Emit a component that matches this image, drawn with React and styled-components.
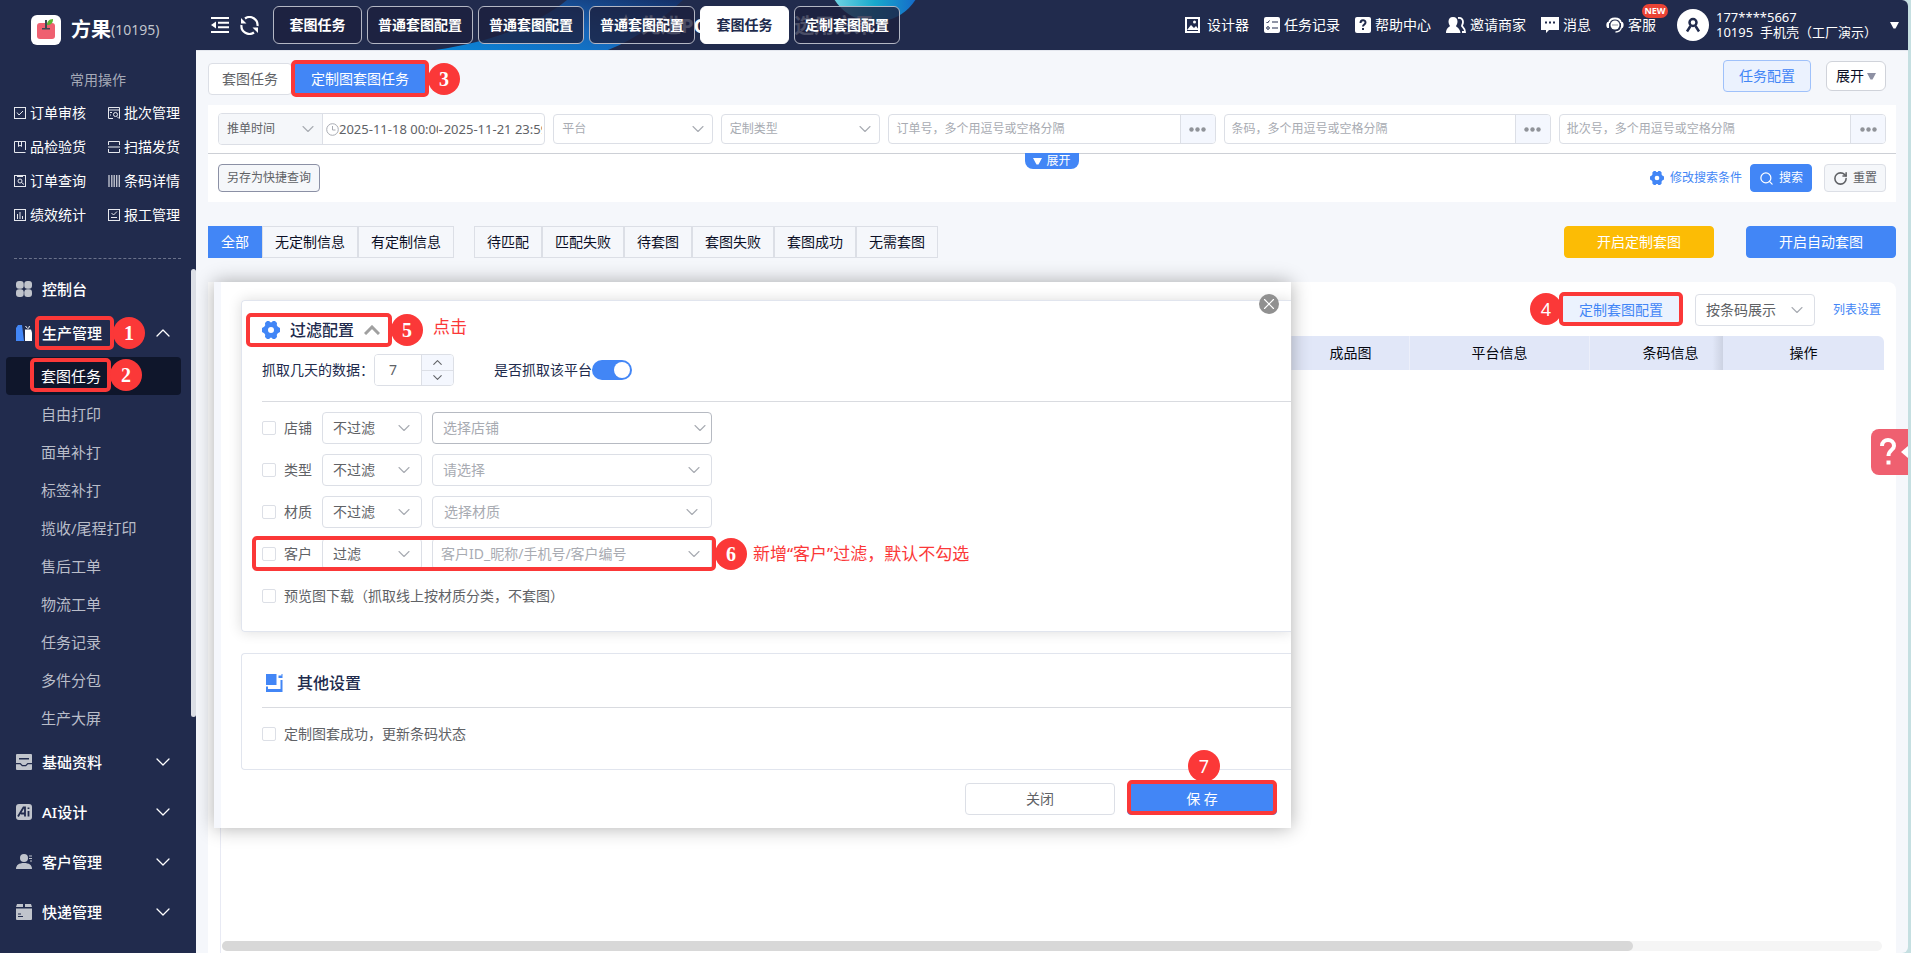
import React from "react";
import styled, { createGlobalStyle, css } from "styled-components";
import { ChevronDown, ChevronUp, Search, RotateCw, X } from "lucide-react";

const GlobalStyle = createGlobalStyle`
  * {
    box-sizing: border-box;
  }
  body {
    margin: 0;
    background: #c5dfe1;
    color: #212b4d;
    font-family: "Noto Sans", "Noto Sans CJK SC", sans-serif;
    font-size: 14px;
    line-height: 20px;
  }
  button, input, select {
    font-family: inherit;
    font-size: inherit;
    line-height: inherit;
    color: inherit;
    margin: 0;
  }
  button {
    cursor: pointer;
    white-space: nowrap;
  }
  a {
    color: inherit;
    text-decoration: none;
    white-space: nowrap;
  }
  svg {
    flex-shrink: 0;
    display: block;
  }
`;

const Shell = styled.div`
  display: flex;
  min-height: 100vh;
  margin-right: 3px;
  background: #f5f7fb;
  border-radius: 0 6px 6px 0;
  overflow: hidden;
  position: relative;
`;

/* ---- callouts ---- */
const Anchor = styled.span`
  position: relative;
  display: inline-flex;
  align-items: center;
  white-space: nowrap;
`;
const Frame = styled.span`
  position: absolute;
  inset: ${p => p.$inset};
  border: 4px solid #fb3838;
  border-radius: 5px;
  pointer-events: none;
  z-index: 3;
`;
const sides = {
  right: css`right: -35px; top: 50%; margin-top: -16px;`,
  left: css`left: -33px; top: 50%; margin-top: -16px;`,
  top: css`left: 50%; top: -34px; margin-left: -14px;`,
};
const Badge = styled.span`
  position: absolute;
  ${p => sides[p.$side]}
  width: 32px;
  height: 32px;
  border-radius: 50%;
  background: #fb3838;
  color: #fff;
  display: flex;
  align-items: center;
  justify-content: center;
  font-family: ${p => (p.$sans ? '"Noto Sans", sans-serif' : '"Liberation Serif", serif')};
  font-size: ${p => (p.$sans ? 18 : 20)}px;
  font-weight: ${p => (p.$sans ? 400 : 700)};
`;
const Mark = ({ n, inset, side = "right", sans }) => (
  <Frame $inset={inset}>
    <Badge $side={side} $sans={sans}>{n}</Badge>
  </Frame>
);
const Note = styled.span`
  color: #fb3838;
  font-size: 17px;
  line-height: 28px;
  white-space: nowrap;
`;

/* ---- sidebar ---- */
const Sidebar = styled.aside`
  position: relative;
  width: 196px;
  flex-shrink: 0;
  background: #212b4d;
  color: #fff;
`;
const Brand = styled.div`
  display: flex;
  align-items: center;
  padding: 15px 0 0 31px;
`;
const BrandName = styled.span`
  margin-left: 10px;
  font-size: 20px;
  font-weight: 700;
  line-height: 30px;
`;
const BrandId = styled.span`
  color: #c0c4cc;
`;
const QuickTitle = styled.div`
  margin-top: 25px;
  text-align: center;
  color: #a6aab8;
`;
const QuickGrid = styled.nav`
  display: grid;
  grid-template-columns: 94px 1fr;
  row-gap: 14px;
  margin: 13px 15px 0 14px;
  padding-bottom: 33px;
  border-bottom: 1px dashed #6b728a;
`;
const QuickLink = styled.a`
  display: flex;
  align-items: center;
  gap: 4px;
`;
const Menu = styled.nav`
  padding-top: 9px;
  font-size: 15px;
`;
const MenuGroup = styled.a`
  display: flex;
  align-items: center;
  height: ${p => p.$h || 50}px;
  padding: 0 21px 0 16px;
  gap: 10px;
  font-weight: 500;
  & > svg:last-child {
    margin-left: auto;
  }
`;
const SubItem = styled.a`
  display: flex;
  align-items: center;
  height: 38px;
  margin: 0 15px 0 6px;
  padding-left: 35px;
  border-radius: 4px;
  color: ${p => (p.$active ? "#fff" : "#b9bdc9")};
  background: ${p => (p.$active ? "#0f162b" : "transparent")};
`;
const SideScroll = styled.div`
  position: absolute;
  right: 0;
  top: 269px;
  width: 5px;
  height: 448px;
  border-radius: 3px;
  background: #dcdfe6;
`;

/* ---- header ---- */
const Main = styled.main`
  flex: 1;
  min-width: 0;
  display: flex;
  flex-direction: column;
`;
const Header = styled.header`
  position: relative;
  height: 51px;
  display: flex;
  align-items: center;
  padding: 0 9px 0 15px;
  background: #212b4d;
  border-bottom: 1px solid #e4e7ee;
  color: #fff;
  overflow: hidden;
`;
const Banner = styled.div`
  position: absolute;
  left: 239px;
  top: 0;
  height: 50px;
`;
const Slogan = styled.span`
  position: absolute;
  left: 206px;
  top: 11px;
  font-size: 20px;
  line-height: 30px;
  font-weight: 700;
  white-space: nowrap;
`;
const HeaderLeft = styled.div`
  position: relative;
  display: flex;
  align-items: center;
  gap: 5px;
`;
const IconButton = styled.button`
  display: flex;
  padding: 0;
  border: 0;
  background: none;
  color: #fff;
  margin-right: ${p => p.$mr}px;
`;
const PageTab = styled.button`
  min-width: 89px;
  height: 38px;
  padding: 0 10px;
  border: 1px solid ${p => (p.$active ? "#fff" : "#b4b7c4")};
  border-radius: 6px;
  background: ${p => (p.$active ? "#fff" : "rgba(29, 33, 62, 0.8)")};
  color: ${p => (p.$active ? "#212b4d" : "#fff")};
  font-weight: 700;
`;
const HeaderRight = styled.div`
  position: relative;
  margin-left: auto;
  display: flex;
  align-items: center;
`;
const TopLink = styled.a`
  position: relative;
  display: flex;
  align-items: center;
  gap: ${p => p.$gap || 4}px;
  margin-right: 15px;
`;
const NewTag = styled.span`
  position: absolute;
  right: -12px;
  top: -11px;
  width: 26px;
  height: 14px;
  border-radius: 7px;
  background: #ea4335;
  font-size: 9px;
  line-height: 14px;
  font-weight: 700;
  text-align: center;
`;
const Avatar = styled.span`
  width: 32px;
  height: 32px;
  margin-left: 6px;
  border-radius: 50%;
  background: #fff;
  display: flex;
  align-items: center;
  justify-content: center;
`;
const Account = styled.div`
  width: 159px;
  margin: 0 15px 0 7px;
  font-size: 13px;
  line-height: 15px;
  white-space: nowrap;
`;

/* ---- content ---- */
const Content = styled.div`
  flex: 1;
  display: flex;
  flex-direction: column;
  padding: 0 12px;
`;
const TopRow = styled.div`
  display: flex;
  align-items: flex-start;
  height: 54px;
  padding-top: 9px;
`;
const Tabs = styled.div`
  display: flex;
  margin-top: 3px;
  margin-right: auto;
`;
const Button = styled.button`
  display: inline-flex;
  align-items: center;
  justify-content: center;
  gap: 6px;
  height: ${p => p.$h || 32}px;
  min-width: ${p => p.$w || 0}px;
  padding: 0 9px;
  border: 1px solid #dcdfe6;
  border-radius: 4px;
  background: #fff;
  color: #606266;
  ${p => p.$small && css`
    height: 28px;
    padding: 0 8px;
    gap: 5px;
    font-size: 12px;
  `}
  ${p => p.$kind === "primary" && css`
    background: #4286f6;
    border-color: #4286f6;
    color: #fff;
  `}
  ${p => p.$kind === "warn" && css`
    background: #fcbc05;
    border-color: #fcbc05;
    color: #fff;
  `}
  ${p => p.$kind === "plain" && css`
    background: #ebf2fe;
    border-color: #9fc1fa;
    color: #4286f6;
  `}
  ${p => p.$kind === "grey" && css`
    background: #f5f7fa;
  `}
`;
const SaveQuery = styled(Button)`
  margin-right: auto;
  border-color: #8b90a5;
`;
const ResetButton = styled(Button)`
  margin-left: 4px;
`;
const ExpandButton = styled(Button)`
  margin: 1px 10px 0 15px;
  color: #0b0f26;
  border-color: #d0d3da;
  border-radius: 6px;
  gap: 3px;
`;
const SearchPanel = styled.section`
  background: #fff;
`;
const SearchGrid = styled.div`
  position: relative;
  display: grid;
  grid-template-columns: repeat(5, minmax(0, 1fr));
  gap: 8px;
  align-items: center;
  height: 49px;
  padding: 0 10px;
  font-size: 12px;
  border-bottom: 1px solid #cdd0d6;
`;
const Pair = styled.div`
  display: grid;
  grid-template-columns: 1fr 1fr;
  gap: 8px;
`;
const Joined = styled.div`
  display: flex;
  height: ${p => p.$h || 30}px;
  border: 1px solid #dcdfe6;
  border-radius: 4px;
  background: #fff;
  overflow: hidden;
`;
const PlainInput = styled.input`
  flex: 1;
  min-width: 0;
  width: 100%;
  padding: 0 ${p => p.$pad || 0}px;
  border: 0;
  outline: 0;
  background: transparent;
  &::placeholder {
    color: #a8abb2;
  }
`;
const DateRange = styled.div`
  flex: 1;
  min-width: 0;
  display: flex;
  align-items: center;
  padding: 0 2px 0 3px;
  color: #606266;
  font-size: 13px;
  span {
    padding: 0 1px;
  }
`;
const MoreButton = styled.button`
  flex-shrink: 0;
  width: 35px;
  padding: 0;
  border: 0;
  border-left: 1px solid #dcdfe6;
  background: #f4f7fe;
  color: #909399;
  display: flex;
  align-items: center;
  justify-content: center;
`;
const SelectBox = styled.span`
  position: relative;
  display: flex;
  align-items: center;
  flex-shrink: 0;
  width: ${p => p.$w || "100%"};
  height: ${p => p.$h || 32}px;
  border: 1px solid ${p => (p.$strong ? "#b6bac2" : "#dcdfe6")};
  border-radius: 4px;
  background: #fff;
  color: ${p => (p.$value ? "#606266" : "#a8abb2")};
  ${p => p.$bare && css`
    border-width: 0 1px 0 0;
    border-radius: 0;
    height: 100%;
    background: #f5f7fa;
  `}
  svg {
    position: absolute;
    right: ${p => p.$right || 7}px;
    color: #a8abb2;
    pointer-events: none;
  }
  select {
    width: 100%;
    height: 100%;
    padding: 0 28px 0 ${p => p.$pad || 8}px;
    border: 0;
    outline: 0;
    appearance: none;
    background: transparent;
  }
`;
const PullTab = styled.button`
  position: absolute;
  left: 817px;
  top: 48px;
  width: 54px;
  height: 16px;
  padding: 0;
  border: 0;
  border-radius: 0 0 8px 8px;
  background: #4286f6;
  color: #fff;
  display: flex;
  align-items: center;
  justify-content: center;
  gap: 4px;
  line-height: 16px;
`;
const SearchActions = styled.div`
  display: flex;
  align-items: center;
  gap: 8px;
  padding: 10px;
`;
const BlueLink = styled.a`
  display: flex;
  align-items: center;
  gap: 6px;
  color: #4286f6;
  font-size: 12px;
`;
const FilterRow = styled.div`
  display: flex;
  margin: 24px 0;
`;
const Segment = styled.div`
  display: flex;
  margin-right: 20px;
`;
const SegmentItem = styled.button`
  height: 32px;
  padding: 0 12px;
  border: 1px solid #dcdfe6;
  background: transparent;
  color: #0b0f26;
  border-radius: 0;
  ${p => p.$active && css`
    background: #4286f6;
    border-color: #4286f6;
    color: #fff;
  `}
`;
const FilterActions = styled.div`
  display: flex;
  gap: 32px;
  margin-left: auto;
`;

/* ---- table ---- */
const TablePanel = styled.section`
  position: relative;
  flex: 1;
  display: flex;
  flex-direction: column;
  padding: 12px 12px 0;
  background: #fff;
  border-radius: 0 8px 0 0;
`;
const TableTools = styled.div`
  display: flex;
  align-items: center;
  justify-content: flex-end;
  margin: 0 3px 10px 0;
`;
const ToolSelect = styled.div`
  margin: 0 18px 0 14px;
`;
const TableWrap = styled.div`
  flex: 1;
  display: flex;
  flex-direction: column;
  border-left: 1px solid #e8eaf4;
`;
const Table = styled.table`
  width: 100%;
  table-layout: fixed;
  border-collapse: separate;
  border-spacing: 0;
  th {
    height: 34px;
    padding: 0;
    font-weight: 400;
    color: #05070f;
    background: #e1e7f8;
    border-right: 1px solid #eceffa;
  }
  th:nth-child(4) {
    padding-left: 28px;
    border-right: 0;
    background: linear-gradient(to right, #e1e7f8 92%, #ccd2e2);
  }
  th:last-child {
    border-right: 0;
    border-top-right-radius: 6px;
  }
`;
const HScroll = styled.div`
  height: 10px;
  margin: auto 2px 2px 1px;
  border-radius: 5px;
  background: #f5f5f5;
  &::before {
    content: "";
    display: block;
    width: 85%;
    height: 10px;
    border-radius: 5px;
    background: #d8d8d8;
  }
`;
const HelpTab = styled.button`
  position: absolute;
  right: 0;
  top: 429px;
  width: 37px;
  height: 46px;
  padding: 0 0 0 7px;
  border: 0;
  border-radius: 8px 0 0 8px;
  background: #ef6070;
`;

/* ---- dialog ---- */
const Dialog = styled.div`
  position: absolute;
  left: 6px;
  right: 605px;
  top: 0;
  padding: 18px 0 13px 20px;
  border-left: 7px solid #f5f7fc;
  background: #fff;
  box-shadow: 0 0 18px rgba(0, 0, 0, 0.32);
  overflow: hidden;
  z-index: 2;
`;
const Card = styled.section`
  padding: 12px 0 19px 20px;
  border: 1px solid #e1e5ee;
  border-right: 0;
  border-radius: 4px 0 0 4px;
  box-shadow: ${p => (p.$raised ? "0 0 14px rgba(0, 0, 0, 0.14)" : "none")};
  & + & {
    margin-top: 21px;
  }
`;
const CardTitle = styled.h2`
  display: flex;
  align-items: center;
  height: 34px;
  margin: 0;
  font-size: 16px;
  font-weight: 500;
  ${Anchor} {
    height: 24px;
    gap: 10px;
  }
  ${Note} {
    align-self: flex-start;
    margin-left: 53px;
    font-weight: 400;
  }
`;
const TitleSpaced = styled(CardTitle)`
  gap: 14px;
  padding-left: 3px;
`;
const DaysRow = styled.div`
  display: flex;
  align-items: center;
  margin-top: 7px;
`;
const Stepper = styled.div`
  display: flex;
  width: 80px;
  height: 32px;
  margin-right: 40px;
  border: 1px solid #dcdfe6;
  border-radius: 4px;
  overflow: hidden;
  color: #606266;
  input {
    width: 46px;
    padding: 0 0 0 14px;
    border: 0;
    outline: 0;
    appearance: textfield;
  }
  input::-webkit-inner-spin-button {
    appearance: none;
  }
`;
const StepButtons = styled.div`
  flex: 1;
  display: flex;
  flex-direction: column;
  border-left: 1px solid #dcdfe6;
  background: #f4f7fe;
  button {
    flex: 1;
    display: flex;
    align-items: center;
    justify-content: center;
    min-height: 0;
    padding: 0;
    border: 0;
    background: none;
  }
  button + button {
    border-top: 1px solid #dcdfe6;
  }
`;
const Switch = styled.input`
  appearance: none;
  width: 40px;
  height: 20px;
  border-radius: 10px;
  background: #4286f6;
  &::after {
    content: "";
    display: block;
    width: 16px;
    height: 16px;
    margin: 2px 2px 2px 22px;
    border-radius: 50%;
    background: #fff;
  }
`;
const Line = styled.hr`
  height: 1px;
  margin: ${p => p.$top}px 0 0;
  border: 0;
  background: #d9dbe0;
`;
const Rows = styled.div`
  display: flex;
  flex-direction: column;
  gap: 10px;
  margin-top: 10px;
`;
const Row = styled.div`
  display: flex;
  align-items: center;
  gap: 10px;
  height: 32px;
`;
const Check = styled.label`
  display: flex;
  align-items: center;
  gap: 8px;
  color: #606266;
  white-space: nowrap;
  input {
    appearance: none;
    width: 14px;
    height: 14px;
    border: 1px solid #dcdfe6;
    border-radius: 2px;
    background: #fff;
  }
`;
const RowAnchor = styled(Anchor)`
  gap: 10px;
`;
const RowNote = styled(Note)`
  margin-left: 31px;
`;
const Footer = styled.div`
  display: flex;
  justify-content: flex-end;
  gap: 12px;
  margin: 13px 14px 0 0;
`;
const CloseButton = styled.button`
  position: absolute;
  right: 12px;
  top: 12px;
  width: 20px;
  height: 20px;
  padding: 0;
  border: 0;
  border-radius: 50%;
  background: #909090;
  color: #fff;
  display: flex;
  align-items: center;
  justify-content: center;
`;

/* ---- icons ---- */
const Logo = () => (
  <svg width="30" height="30" viewBox="0 0 30 30">
    <rect width="30" height="30" rx="6" fill="#fff" />
    <rect x="6" y="8" width="18" height="16" rx="3" fill="#ef6070" />
    <path d="M14 5h2v8h3v1.500h-8V13h3z" fill="#3c4a52" />
    <path d="M16 10c0-4 2-5.500 6-6 0 4-2 6-6 6z" fill="#5cb531" />
  </svg>
);
const quickShapes = {
  check: <><rect x="0.500" y="0.500" width="11" height="11" /><path d="M3 5.500l2 2.500 4-4" /></>,
  batch: <><path d="M5 11.500H.5V.5h11v11" /><path d="M.5 3h11M2 5.500h2M2 8h1" /><circle cx="7.500" cy="7.500" r="2" /><path d="M9 9.500l2 2" /></>,
  book: <><path d="M11.500 9V.5H.5v11h11" /><path d="M4.500.5v5L6 4.200l1.500 1.300v-5" /></>,
  scan: <><path d="M.5 4V.5h11V4M.5 8v3.500h11V8" /><path d="M0 6h12" strokeWidth="1.500" opacity="0.700" /></>,
  find: <><rect x="0.500" y="0.500" width="11" height="11" /><path d="M3 1.500h6M7.500 7.500l2.500 2" /><circle cx="6" cy="6" r="2" /></>,
  bars: <path d="M1 0v12M3.800 0v12M6.200 0v12M8.700 0v12M11.300 0v12" strokeWidth="1.300" opacity="0.850" />,
  chart: <><rect x="0.500" y="0.500" width="11" height="11" /><path d="M3.500 5v5M6 3v7M8.500 7v3" /></>,
  report: <><rect x="0.500" y="0.500" width="11" height="11" /><path d="M3.500 4l2 2 3.500-3.500M3 8.500h6" /></>,
};
const QuickIcon = ({ name }) => (
  <svg width="12" height="12" viewBox="0 0 12 12" fill="none" stroke="#e6e8ee" strokeWidth="1">
    {quickShapes[name]}
  </svg>
);
const menuShapes = {
  console: <>
    <rect x="0" y="0" width="7.700" height="7.700" rx="3" /><rect x="8.300" y="0" width="7.700" height="7.700" rx="3" />
    <rect x="0" y="8.300" width="7.700" height="7.700" rx="3" /><rect x="8.300" y="8.300" width="7.700" height="7.700" rx="3" />
  </>,
  production: <>
    <path d="M2 0h4l2 16H0V3z" fill="#4286f6" />
    <path d="M9 4.500h6l1 3V16H9z" fill="#fff" /><path d="M9.500 1l2 2.500M13.500 1l-1 2.500" stroke="#fff" />
  </>,
  data: <path fillRule="evenodd" d="M1 0h14a1 1 0 0 1 1 1v14a1 1 0 0 1-1 1H1a1 1 0 0 1-1-1V1a1 1 0 0 1 1-1zM3 4v1.500h10V4zM0 9v1.300h4l2 2h4l2-2h4V9h-4.500l-2 2h-3l-2-2z" />,
  ai: <>
    <rect width="16" height="16" rx="3" />
    <path d="M2 12.500L7.500 3.500h1.500v9M5 9.500h4M12.500 7v5.500M12.500 3.500v1.500" fill="none" stroke="#212b4d" strokeWidth="1.800" />
  </>,
  customer: <>
    <circle cx="8" cy="4" r="4" /><path d="M0 15c0-4 3-6 8-6s8 2 8 6z" />
    <path d="M13 2h3M13 4.500h3M14 7h2" stroke="#c0c4cc" />
  </>,
  express: <>
    <path d="M1 0h6v3H0zM9 0h6l1 3H9zM0 4.500h16V15a1 1 0 0 1-1 1H1a1 1 0 0 1-1-1z" />
    <path d="M2 10h3M2 12.500h5" stroke="#212b4d" />
  </>,
};
const MenuIcon = ({ name }) => (
  <svg width="16" height="16" viewBox="0 0 16 16" fill="#c0c4cc">{menuShapes[name]}</svg>
);
const Gear = ({ size }) => (
  <svg width={size} height={size} viewBox="0 0 18 18" fill="#4286f6">
    <path fillRule="evenodd" d="M5 0h2.200l1 1.200h1.600L10.800 0H13l2 2-.2 2.200 1 1.600L18 7v4l-2.200 1.200-1 1.600.2 2.200-2 2h-2.200l-1-1.200H8.200L7.200 18H5l-2-2 .2-2.200-1-1.600L0 11V7l2.200-1.200 1-1.600L3 2zM9 6a3 3 0 1 0 0 6 3 3 0 0 0 0-6z" />
  </svg>
);
const Triangle = ({ w = 9, color = "#fff" }) => (
  <svg width={w} height={w - 2} viewBox="0 0 9 7"><path d="M0 0h9L5.500 6.500h-2z" fill={color} /></svg>
);
const Dots = () => (
  <svg width="17" height="5" viewBox="0 0 17 5" fill="#909399">
    <circle cx="2.500" cy="2.500" r="2.200" /><circle cx="8.500" cy="2.500" r="2.200" /><circle cx="14.500" cy="2.500" r="2.200" />
  </svg>
);
const Clock = () => (
  <svg width="13" height="13" viewBox="0 0 13 13" fill="none" stroke="#a8abb2">
    <circle cx="6.500" cy="6.500" r="5.800" /><path d="M6.500 3v4H9.500" />
  </svg>
);
const topShapes = {
  design: <>
    <rect x="1" y="1" width="13" height="14" fill="none" stroke="#fff" strokeWidth="2" />
    <path d="M2 13l4-5 3 3 2-2 3 4z" /><circle cx="9.500" cy="5" r="1.500" />
  </>,
  record: <>
    <rect width="16" height="16" rx="2" />
    <path d="M2.500 5l1 1 2-2.500M8 5h6M8 11h6" fill="none" stroke="#212b4d" />
    <circle cx="4" cy="11" r="1.300" fill="none" stroke="#212b4d" />
  </>,
  help: <>
    <rect width="16" height="16" rx="2" />
    <path d="M5.500 6c0-3.500 5-3.500 5-.5 0 2-2.500 2-2.500 4M8 11v2" fill="none" stroke="#212b4d" strokeWidth="2" />
  </>,
  invite: <>
    <path d="M7 0c3 0 4.500 2 4.500 4.500C11.500 7 10.500 8 10 9c0 1 4 2 4.500 7H0c0-5 3.500-6 4-7-.5-1-1.500-2-1.500-4.500C2.500 2 4 0 7 0z" />
    <path d="M12 1c4-.5 5 2 5 4 0 2-1 3-1 4 0 .800 3 2 3 6h-3" fill="none" stroke="#fff" strokeWidth="1.800" />
  </>,
  message: <>
    <path d="M0 0h18v13H8l-3 3v-3H0z" />
    <path d="M4 5.500h2M8 5.500h2M12 5.500h2" stroke="#212b4d" strokeWidth="2" />
  </>,
  service: <>
    <path d="M3 6C4 0 14 0 15 6" fill="none" stroke="#fff" strokeWidth="1.800" />
    <circle cx="9" cy="8" r="4.500" /><path d="M3 5v6H1.500C0 10 0 6 1.500 5zM15 5v6h1.500c1.500-1 1.500-5 0-6z" />
    <path d="M15.500 10c-.5 3-3 5-6 5" fill="none" stroke="#fff" strokeWidth="1.500" />
    <path d="M6.500 8h1M8.500 8h1M10.500 8h1" stroke="#212b4d" strokeWidth="1.200" />
  </>,
};
const TopIcon = ({ name, w = 16 }) => (
  <svg width={w} height="16" viewBox={`0 0 ${w} 16`} fill="#fff">{topShapes[name]}</svg>
);

const quickLinks = [
  ["check", "订单审核"], ["batch", "批次管理"],
  ["book", "品检验货"], ["scan", "扫描发货"],
  ["find", "订单查询"], ["bars", "条码详情"],
  ["chart", "绩效统计"], ["report", "报工管理"],
];
const subItems = ["自由打印", "面单补打", "标签补打", "揽收/尾程打印", "售后工单", "物流工单", "任务记录", "多件分包", "生产大屏"];
const groups = [["data", "基础资料"], ["ai", "AI设计"], ["customer", "客户管理"], ["express", "快递管理"]];
const pageTabs = ["套图任务", "普通套图配置", "普通套图配置", "普通套图配置", "套图任务", "定制套图配置"];
const topLinks = [["design", "设计器", 15, 7], ["record", "任务记录"], ["help", "帮助中心"], ["invite", "邀请商家", 20], ["message", "消息", 18]];
const customFilters = ["全部", "无定制信息", "有定制信息"];
const statusFilters = ["待匹配", "匹配失败", "待套图", "套图失败", "套图成功", "无需套图"];

const Select = ({ label, text, ...rest }) => (
  <SelectBox {...rest}>
    <select aria-label={label || text}>
      <option>{text}</option>
    </select>
    <ChevronDown size={20} strokeWidth={1.3} />
  </SelectBox>
);

const MultiInput = ({ text }) => (
  <Joined>
    <PlainInput $pad={7} placeholder={text} aria-label={text} />
    <MoreButton aria-label="更多"><Dots /></MoreButton>
  </Joined>
);

const SideNav = () => (
  <Sidebar>
    <Brand>
      <Logo />
      <BrandName>方果</BrandName>
      <BrandId>(10195)</BrandId>
    </Brand>
    <QuickTitle>常用操作</QuickTitle>
    <QuickGrid>
      {quickLinks.map(([icon, text]) => (
        <QuickLink href="#" key={text}><QuickIcon name={icon} />{text}</QuickLink>
      ))}
    </QuickGrid>
    <Menu>
      <MenuGroup href="#" $h={41}><MenuIcon name="console" /><span>控制台</span></MenuGroup>
      <MenuGroup href="#" $h={48}>
        <MenuIcon name="production" />
        <Anchor>生产管理<Mark n={1} inset="-7px -12px -7px -7px" /></Anchor>
        <ChevronUp size={24} strokeWidth={1.3} />
      </MenuGroup>
      <SubItem href="#" $active>
        <Anchor>套图任务<Mark n={2} inset="-8px -10px -6px -11px" /></Anchor>
      </SubItem>
      {subItems.map(text => <SubItem href="#" key={text}>{text}</SubItem>)}
      {groups.map(([icon, text]) => (
        <MenuGroup href="#" key={text}>
          <MenuIcon name={icon} />
          <span>{text}</span>
          <ChevronDown size={24} strokeWidth={1.3} />
        </MenuGroup>
      ))}
    </Menu>
    <SideScroll />
  </Sidebar>
);

const TopBar = () => (
  <Header>
    <Banner aria-hidden="true">
      <svg width="490" height="50" viewBox="0 0 490 50">
        <defs>
          <linearGradient id="wave" x1="0" y1="1" x2="1" y2="0">
            <stop offset="0" stopColor="#0a86d8" />
            <stop offset="0.500" stopColor="#1765b8" />
            <stop offset="1" stopColor="#152f66" />
          </linearGradient>
          <linearGradient id="ball" x1="0" y1="0" x2="1" y2="0">
            <stop offset="0" stopColor="#7fdbe6" />
            <stop offset="0.500" stopColor="#17a9cc" />
            <stop offset="1" stopColor="#1560c8" />
          </linearGradient>
        </defs>
        <path d="M0 50C60 42 105 22 132 0h116c-20 18-45 38-75 50z" fill="url(#wave)" />
        <circle cx="440" cy="-26" r="48" fill="url(#ball)" />
        <path d="M191 14l2 5 5 2-5 2-2 5-2-5-5-2 5-2z" fill="#fff" />
      </svg>
      <Slogan>先进POD 工厂都 选用方果</Slogan>
    </Banner>
    <HeaderLeft>
      <IconButton $mr={6} aria-label="收起菜单">
        <svg width="18" height="16" viewBox="0 0 18 16" fill="none" stroke="#fff" strokeWidth="2">
          <path d="M0 1h18M7 5.700h11M7 10.300h11M0 15h18" />
          <path d="M5 4.500v7L0 8z" fill="#fff" stroke="none" />
        </svg>
      </IconButton>
      <IconButton $mr={9} aria-label="刷新">
        <svg width="19" height="19" viewBox="0 0 19 19" fill="none" stroke="#fff" strokeWidth="2.200">
          <path d="M5 2.500A8 8 0 0 1 17.500 10M14 16.500A8 8 0 0 1 1.500 9" />
          <path d="M1 2v5.500h5.500z M18 17v-5.500h-5.500z" fill="#fff" stroke="none" />
        </svg>
      </IconButton>
      {pageTabs.map((text, i) => <PageTab key={i} $active={i === 4}>{text}</PageTab>)}
    </HeaderLeft>
    <HeaderRight>
      {topLinks.map(([icon, text, w, gap]) => (
        <TopLink href="#" key={text} $gap={gap}><TopIcon name={icon} w={w} />{text}</TopLink>
      ))}
      <TopLink href="#">
        <TopIcon name="service" w={18} />客服
        <NewTag>NEW</NewTag>
      </TopLink>
      <Avatar>
        <svg width="16" height="16" viewBox="0 0 16 16" fill="none" stroke="#212b4d" strokeWidth="2.500">
          <circle cx="8" cy="5.500" r="3.500" /><path d="M2 14.500L5.500 9M14 14.500L10.500 9" />
        </svg>
      </Avatar>
      <Account>
        <div>177****5667</div>
        <div>10195&nbsp; 手机壳（工厂演示）</div>
      </Account>
      <Triangle />
    </HeaderRight>
  </Header>
);

const FilterDialog = () => (
  <Dialog role="dialog" aria-label="定制套图配置">
    <Card $raised>
      <CardTitle>
        <Anchor>
          <Gear size={18} />
          <span>过滤配置</span>
          <svg width="16" height="10" viewBox="0 0 16 10" fill="none" stroke="#a0a0a0" strokeWidth="3">
            <path d="M1 9l7-7 7 7" />
          </svg>
          <Mark n={5} inset="-5px -12px -5px -16px" />
        </Anchor>
        <Note>点击</Note>
      </CardTitle>
      <DaysRow>
        <label htmlFor="days">抓取几天的数据：</label>
        <Stepper>
          <input id="days" type="number" defaultValue={7} />
          <StepButtons>
            <button aria-label="增加"><ChevronUp size={15} strokeWidth={1.7} /></button>
            <button aria-label="减少"><ChevronDown size={15} strokeWidth={1.7} /></button>
          </StepButtons>
        </Stepper>
        <label htmlFor="grab">是否抓取该平台</label>
        <Switch id="grab" type="checkbox" role="switch" defaultChecked />
      </DaysRow>
      <Line $top={15} />
      <Rows>
        <Row>
          <Check><input type="checkbox" />店铺</Check>
          <Select $w="100px" $pad={10} $value label="店铺过滤" text="不过滤" />
          <Select $w="280px" $pad={10} $strong $right={1} text="选择店铺" />
        </Row>
        <Row>
          <Check><input type="checkbox" />类型</Check>
          <Select $w="100px" $pad={10} $value label="类型过滤" text="不过滤" />
          <Select $w="280px" $pad={10} label="类型" text="请选择" />
        </Row>
        <Row>
          <Check><input type="checkbox" />材质</Check>
          <Select $w="100px" $pad={10} $value label="材质过滤" text="不过滤" />
          <Select $w="280px" $pad={11} $right={9} text="选择材质" />
        </Row>
        <Row>
          <RowAnchor>
            <Check><input type="checkbox" />客户</Check>
            <Select $w="100px" $pad={10} $value label="客户过滤" text="过滤" />
            <Select $w="280px" $pad={8} text="客户ID_昵称/手机号/客户编号" />
            <Mark n={6} inset="-2px -4px -1px -10px" />
          </RowAnchor>
          <RowNote>新增“客户”过滤，默认不勾选</RowNote>
        </Row>
        <Row>
          <Check><input type="checkbox" />预览图下载（抓取线上按材质分类，不套图）</Check>
        </Row>
      </Rows>
    </Card>
    <Card>
      <TitleSpaced>
        <svg width="18" height="18" viewBox="0 0 18 18" fill="#4286f6">
          <path d="M1 0h10.500v11H1zM13.500 1.500h3V0h1v4h-4z" />
          <path d="M1 12.500h2V15h12.500V6h2v12H1z" />
        </svg>
        <span>其他设置</span>
      </TitleSpaced>
      <Line $top={7} />
      <Rows>
        <Row>
          <Check><input type="checkbox" />定制图套成功，更新条码状态</Check>
        </Row>
      </Rows>
    </Card>
    <Footer>
      <Button $w={150}>关闭</Button>
      <Anchor>
        <Button $w={150} $kind="primary">保 存</Button>
        <Mark n={7} inset="-3px 0 0 0" side="top" sans />
      </Anchor>
    </Footer>
    <CloseButton aria-label="关闭弹窗"><X size={18} strokeWidth={1.5} /></CloseButton>
  </Dialog>
);

const App = () => (
  <>
    <GlobalStyle />
    <Shell>
      <SideNav />
      <Main>
        <TopBar />
        <Content>
          <TopRow>
            <Tabs>
              <Button $w={84}>套图任务</Button>
              <Anchor>
                <Button $w={136} $kind="primary">定制图套图任务</Button>
                <Mark n={3} inset="-3px -1px -2px -1px" />
              </Anchor>
            </Tabs>
            <Button $w={88} $kind="plain">任务配置</Button>
            <ExpandButton $w={60} $h={30}>展开<Triangle color="#8d90a3" /></ExpandButton>
          </TopRow>
          <SearchPanel>
            <SearchGrid>
              <Joined $h={32}>
                <Select $bare $w="104px" $right={4} $value label="时间类型" text="推单时间" />
                <DateRange>
                  <Clock />
                  <PlainInput defaultValue="2025-11-18 00:00:00" aria-label="开始时间" />
                  <span>-</span>
                  <PlainInput defaultValue="2025-11-21 23:59:59" aria-label="结束时间" />
                </DateRange>
              </Joined>
              <Pair>
                <Select $h={30} $right={4} text="平台" />
                <Select $h={30} $right={4} text="定制类型" />
              </Pair>
              <MultiInput text="订单号，多个用逗号或空格分隔" />
              <MultiInput text="条码，多个用逗号或空格分隔" />
              <MultiInput text="批次号，多个用逗号或空格分隔" />
              <PullTab><Triangle />展开</PullTab>
            </SearchGrid>
            <SearchActions>
              <SaveQuery $small $w={102} $kind="grey">另存为快捷查询</SaveQuery>
              <BlueLink href="#"><Gear size={14} />修改搜索条件</BlueLink>
              <Button $small $w={62} $kind="primary"><Search size={15} />搜索</Button>
              <ResetButton $small $w={62} $kind="grey"><RotateCw size={15} strokeWidth={2.5} />重置</ResetButton>
            </SearchActions>
          </SearchPanel>
          <FilterRow>
            <Segment>
              {customFilters.map((text, i) => <SegmentItem key={text} $active={i === 0}>{text}</SegmentItem>)}
            </Segment>
            <Segment>
              {statusFilters.map(text => <SegmentItem key={text}>{text}</SegmentItem>)}
            </Segment>
            <FilterActions>
              <Button $w={150} $kind="warn">开启定制套图</Button>
              <Button $w={150} $kind="primary">开启自动套图</Button>
            </FilterActions>
          </FilterRow>
          <TablePanel>
            <TableTools>
              <Anchor>
                <Button $w={120} $kind="plain">定制套图配置</Button>
                <Mark n={4} inset="-2px -2px 0 -2px" side="left" sans />
              </Anchor>
              <ToolSelect>
                <Select $w="120px" $pad={10} $value label="展示方式" text="按条码展示" />
              </ToolSelect>
              <BlueLink href="#">列表设置</BlueLink>
            </TableTools>
            <TableWrap>
              <Table>
                <colgroup>
                  <col />
                  <col width="118" />
                  <col width="180" />
                  <col width="133" />
                  <col width="161" />
                </colgroup>
                <thead>
                  <tr>
                    <th />
                    <th>成品图</th>
                    <th>平台信息</th>
                    <th>条码信息</th>
                    <th>操作</th>
                  </tr>
                </thead>
              </Table>
              <HScroll />
            </TableWrap>
            <FilterDialog />
          </TablePanel>
        </Content>
      </Main>
      <HelpTab aria-label="帮助">
        <svg width="30" height="30" viewBox="0 0 30 30" fill="none" stroke="#fff" strokeWidth="4">
          <path d="M4 9c0-8 12-8 12 0 0 4-5.500 4-5.500 10" /><path d="M10.500 23.500v4" />
          <path d="M30 9v12l-7-6z" fill="#fff" stroke="none" />
        </svg>
      </HelpTab>
    </Shell>
  </>
);

export default App;
